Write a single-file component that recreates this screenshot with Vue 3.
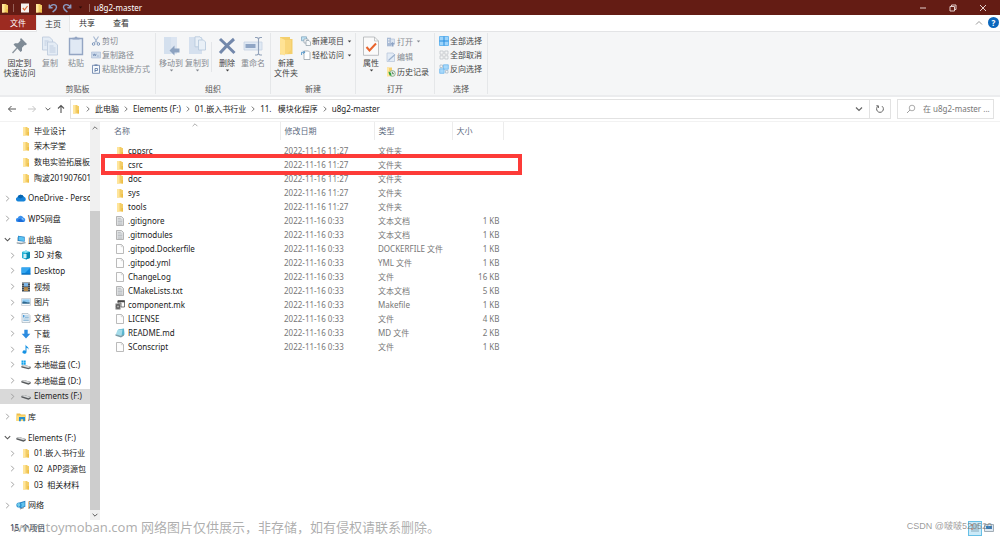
<script setup>
import { ref } from 'vue'

const tree = [
  { t: '毕业设计', i: 'folder', d: 1 },
  { t: '荣木学堂', i: 'folder', d: 1 },
  { t: '数电实验拓展板.', i: 'folder', d: 1 },
  { t: '陶波2019076014', i: 'folder', d: 1 },
  { t: 'OneDrive - Personal', i: 'cloud', d: 0, a: 'r' },
  { t: 'WPS网盘', i: 'wps', d: 0, a: 'r' },
  { t: '此电脑', i: 'pc', d: 0, a: 'd' },
  { t: '3D 对象', i: 'cube', d: 1, a: 'r' },
  { t: 'Desktop', i: 'desktop', d: 1, a: 'r' },
  { t: '视频', i: 'video', d: 1, a: 'r' },
  { t: '图片', i: 'image', d: 1, a: 'r' },
  { t: '文档', i: 'document', d: 1, a: 'r' },
  { t: '下载', i: 'download', d: 1, a: 'r' },
  { t: '音乐', i: 'music', d: 1, a: 'r' },
  { t: '本地磁盘 (C:)', i: 'sysdisk', d: 1, a: 'r' },
  { t: '本地磁盘 (D:)', i: 'disk', d: 1, a: 'r' },
  { t: 'Elements (F:)', i: 'disk', d: 1, a: 'r', sel: true },
  { t: '库', i: 'library', d: 0, a: 'r' },
  { t: 'Elements (F:)', i: 'disk', d: 0, a: 'd' },
  { t: '01.嵌入书行业', i: 'folder', d: 1, a: 'r' },
  { t: '02  APP资源包', i: 'folder', d: 1, a: 'r' },
  { t: '03  相关材料', i: 'folder', d: 1, a: 'r' },
  { t: '网络', i: 'network', d: 0, a: 'r' }
]

const day = '2022-11-16 '
const files = [
  ['cppsrc', '11:27', '文件夹', '', 'folder'],
  ['csrc', '11:27', '文件夹', '', 'folder'],
  ['doc', '11:27', '文件夹', '', 'folder'],
  ['sys', '11:27', '文件夹', '', 'folder'],
  ['tools', '11:27', '文件夹', '', 'folder'],
  ['.gitignore', '0:33', '文本文档', '1 KB', 'text'],
  ['.gitmodules', '0:33', '文本文档', '1 KB', 'text'],
  ['.gitpod.Dockerfile', '0:33', 'DOCKERFILE 文件', '1 KB', 'blank'],
  ['.gitpod.yml', '0:33', 'YML 文件', '1 KB', 'blank'],
  ['ChangeLog', '0:33', '文件', '16 KB', 'blank'],
  ['CMakeLists.txt', '0:33', '文本文档', '5 KB', 'text'],
  ['component.mk', '0:33', 'Makefile', '1 KB', 'make'],
  ['LICENSE', '0:33', '文件', '4 KB', 'blank'],
  ['README.md', '0:33', 'MD 文件', '2 KB', 'md'],
  ['SConscript', '0:33', '文件', '1 KB', 'blank']
]

const crumbs = ['此电脑', 'Elements (F:)', '01.嵌入书行业', '11.   模块化程序', 'u8g2-master']
const query = ref('')
</script>

<template>
  <svg class="defs" aria-hidden="true">
    <symbol id="folder" viewBox="0 0 10 10"><path d="M2 1h4.500v1h1.500v7.500H2z" fill="#f3cd66" /><path d="M2 1h2.500v8.500H2z" fill="#ffe59b" /><path d="M6.500 6h1.500v3.500H6.500z" fill="#eebd45" /></symbol>
    <symbol id="blank" viewBox="0 0 10 10"><path d="M1.500.5h5l2 2v7h-7z" fill="#fdfdfd" stroke="#a9a9a9" stroke-width=".8" /><path d="M6.300.7v2h2" fill="none" stroke="#b5b5b5" stroke-width=".5" /></symbol>
    <symbol id="text" viewBox="0 0 10 10"><path d="M1.500.5h5l2 2v7h-7z" fill="#e2e4e5" stroke="#a5a5a5" stroke-width=".8" /><path d="M2.800 2.500h3M2.800 4h4.500M2.800 5.500h4.500M2.800 7h4.500M2.800 8.300h4.500" stroke="#a8adb1" stroke-width=".6" /></symbol>
    <symbol id="make" viewBox="0 0 10 10"><path d="M3 .5h6.500v6.500H6V3H3z" fill="#fff" stroke="#555" stroke-width=".8" /><path d="M2.600.7h7v1.600h-7z" fill="#444" /><path d="M.5 3.500h5v6h-5z" fill="#777" /><circle cx="3" cy="6.500" r="1.600" fill="#aaa" stroke="#333" stroke-width=".6" /></symbol>
    <symbol id="md" viewBox="0 0 10 10"><path d="M3 1.500l6-1 .5 6L7 8.500z" fill="#58b5cf" /><path d="M2.500 2l5-.6L6.500 8 .8 6.500z" fill="#a4dcea" /><path d="M.5 6.200l5.500 1.500 3-1.500v1.300L6 9.500.5 7.700z" fill="#7b9da9" /></symbol>
    <symbol id="cloud" viewBox="0 0 10 10"><path d="M2 8.500a2.200 2.200 0 0 1-.5-4.300 3.300 3.300 0 0 1 6.200-.4A2.400 2.400 0 0 1 8 8.500z" fill="#1683d9" /><path d="M1.500 4.200a3.300 3.300 0 0 1 6.200-.4l-3 1.800z" fill="#0563ae" /></symbol>
    <symbol id="wps" viewBox="0 0 10 10"><path d="M2 8a2 2 0 0 1-.3-4 3 3 0 0 1 5.600-.6A2.500 2.500 0 0 1 8 8z" fill="#3a91ee" /><path d="M1 6l2 2h5L4.500 4.500z" fill="#1b6bd8" /><path d="M5.500 5l1-1 1.500 2z" fill="#a8d4ff" /></symbol>
    <symbol id="pc" viewBox="0 0 10 10"><path d="M2 .8l6.700 1v5L2 6z" fill="#2383c8" /><path d="M2.700 1.600l5.300.8v3.500l-5.300-.6z" fill="#5cc3f1" /><path d="M.7 7.200l4.600.5L9.500 7v1.200L5 9.300.7 8.500z" fill="#8f9ba3" /><path d="M1 2.200h1v4H1z" fill="#bbc6cc" /></symbol>
    <symbol id="cube" viewBox="0 0 10 10"><path d="M1 2l4-1.500L9 2v6L5 9.500 1 8z" fill="#23b1d5" /><path d="M1 2l4 1 4-1-4-1.500z" fill="#8ae3f2" /><path d="M5 3l4-1v6L5 9.500z" fill="#078bb2" /><path d="M2.500 4h3v4h-3z" fill="#caeff6" /></symbol>
    <symbol id="desktop" viewBox="0 0 10 10"><path d="M.5 1.500h9v7h-9z" fill="#0d86df" /><path d="M.5 1.500h9L4 7H.5z" fill="#36a7f0" /><path d="M.5 7.600h9v.9h-9z" fill="#1166ab" /></symbol>
    <symbol id="video" viewBox="0 0 10 10"><path d="M1 .5h8v9H1z" fill="#3d4853" /><path d="M3 1h4v3.500H3z" fill="#7cb6e8" /><path d="M3 5.200h4V9H3z" fill="#b58a4c" /><path d="M2 1v8M8 1v8" stroke="#d7dde2" stroke-width=".8" stroke-dasharray="1 1" /></symbol>
    <symbol id="image" viewBox="0 0 10 10"><path d="M.6 1.600h8.800v6.800H.6z" fill="#fff" stroke="#a9b4bd" stroke-width=".6" /><path d="M1.300 2.300h7.400v3H1.300z" fill="#8fcaf2" /><path d="M1.300 5c3-1.500 4 1 7.400.2v1.500H1.300z" fill="#2e6991" /></symbol>
    <symbol id="document" viewBox="0 0 10 10"><path d="M1 .5h6l2 2v7H1z" fill="#edf4f9" stroke="#9aaab6" stroke-width=".6" /><path d="M4 3h3.800M4 4.500h3.800M2.300 6h5.500M2.300 7.500h5.500" stroke="#5b9ac8" stroke-width=".6" /><path d="M2 2h1.500v2.500H2z" fill="#4d9cda" /></symbol>
    <symbol id="download" viewBox="0 0 10 10"><path d="M3.300.8h3.400v4h2.600L5 9.400.7 4.800h2.600z" fill="#2c8ce0" /></symbol>
    <symbol id="music" viewBox="0 0 10 10"><path d="M4.500.5c.6 2 3.500 2 3 5.200-.4-1.300-1.300-1.700-2-1.900V8a2 1.600 0 1 1-1-1.300z" fill="#1692e3" /></symbol>
    <symbol id="disk" viewBox="0 0 10 10"><path d="M.4 5L3 4l6.700 2v1.500L7.500 8.800.4 6.500z" fill="#55585a" /><path d="M.4 5L3 4l6.700 2L7.400 7.300z" fill="#d5d7d8" /></symbol>
    <symbol id="sysdisk" viewBox="0 0 10 10"><path d="M.4 6L3 4.800l6.700 2v1.400L7.500 9.300.4 7.500z" fill="#5c5f61" /><path d="M.4 6L3 4.800l6.700 2L7.400 8z" fill="#d5d7d8" /><path d="M.5.5h1.900v1.900H.5zM2.800.5h1.900v1.900H2.800zM.5 2.800h1.900v1.900H.5zM2.800 2.800h1.900v1.900H2.800z" fill="#11a3ec" /></symbol>
    <symbol id="library" viewBox="0 0 10 10"><path d="M.5 1.500h3.500l1 1h4.500V9h-9z" fill="#eebf4b" /><path d="M.5 3.500h9V9h-9z" fill="#ffdd7c" /><path d="M3 5h6v4.200H7.200V7.300H4.800v1.900H3z" fill="#278fd0" /></symbol>
    <symbol id="network" viewBox="0 0 10 10"><path d="M3.500 2.500L9.300.8v6L3.800 8.500z" fill="#247fc2" /><path d="M4.300 3.200l4.300-1.300v4.300L4.500 7.500z" fill="#61c3ee" /><circle cx="3" cy="5" r="2.600" fill="#268dd1" /><path d="M1 4q2-2 3 0T2 7" fill="#74cce9" /><path d="M4 9l4-1.400" stroke="#647987" stroke-width=".8" /></symbol>

    <symbol id="pin" viewBox="0 0 20 20"><path d="M11 3l6 6-1.300 1.200-1-.2-2.700 2.700v3L10.600 17 3.500 9.600 5 8.300h3L10.500 5.500l-.4-1.300z" fill="#7f8b96" transform="translate(0 -1)" /><path d="M7 12l-4.500 5" stroke="#8c969f" stroke-width="1.300" /></symbol>
    <symbol id="copy" viewBox="0 0 20 20"><g fill="#e4ecf5" stroke="#b9c8da" stroke-width=".8"><path d="M2.500 1h7l3 3v10h-10z" /><path d="M7.500 6h7l3 3v10h-10z" /></g><path d="M4.500 5h4M4.500 7h2M4.500 9h2M9.500 10h4M9.500 12h6M9.500 14h6M9.500 16h6" stroke="#bccbdf" stroke-width=".9" /></symbol>
    <symbol id="paste" viewBox="0 0 20 20"><path d="M3.500 2.500h13v16h-13z" fill="#e0e9f4" stroke="#93a5c3" stroke-width="1.400" /><path d="M6.500 3.500V1.800h2L9 .7h2l.5 1.100h2v1.700z" fill="#93a5c3" /></symbol>
    <symbol id="move" viewBox="0 0 20 20"><path d="M3 1h13v17H3z" fill="#dce5f1" /><path d="M3 1h7v17H3z" fill="#d4e0ee" /><path d="M8.500 14.500l5-5v3h5v4h-5v3z" fill="#8da3c1" /></symbol>
    <symbol id="copyto" viewBox="0 0 20 20"><path d="M2 1h13v17H2z" fill="#d5e0ee" /><g fill="#e9f0f7" stroke="#b4c6da" stroke-width=".8"><path d="M8 .8h5l2 2v8h-7z" /><path d="M11.500 4h5l2 2v8h-7z" /></g></symbol>
    <symbol id="delete" viewBox="0 0 20 20"><path d="M3 3Q9.500 9 17.500 17M17 3Q10 9 3 17" fill="none" stroke="#7388ab" stroke-width="3" /></symbol>
    <symbol id="rename" viewBox="0 0 20 20"><path d="M1 6h18v8H1z" fill="#e0e9f4" stroke="#c6d3e3" stroke-width=".8" /><path d="M2.500 8h10v4h-10z" fill="#90a6c5" /><path d="M12 1.500h2l1.500 1 1.500-1h2M12 19h2l1.500-1 1.500 1h2M15.500 2.500V18" fill="none" stroke="#91a1b9" stroke-width="1.100" /></symbol>
    <symbol id="bigfolder" viewBox="0 0 20 20"><path d="M4 1h10v2h2.500v15L4 18.500z" fill="#f4cf6d" /><path d="M4 1.500L9 4v15.500L4 17.500z" fill="#ffe395" /><path d="M9 4h6v10l-4 4H9z" fill="#f9d67b" /></symbol>
    <symbol id="props" viewBox="0 0 20 20"><path d="M2.500 1h11l4 4v14.300h-15z" fill="#fafafa" stroke="#aeb2b5" stroke-width=".8" /><path d="M13.500 1v4h4" fill="none" stroke="#aeb2b5" stroke-width=".7" /><path d="M5.500 11l3 3.500 6.500-7" fill="none" stroke="#e8642d" stroke-width="2" /></symbol>

    <symbol id="cut" viewBox="0 0 10 10"><path d="M2.500.5l4 6.500M7.500.5l-4 6.500" stroke="#a5b7d0" stroke-width="1.100" /><g fill="none" stroke="#7e97bb"><circle cx="2.600" cy="8" r="1.300" /><circle cx="7.400" cy="8" r="1.300" /></g></symbol>
    <symbol id="path" viewBox="0 0 10 10"><path d="M.5 2h9v6h-9z" fill="#cedbeb" stroke="#a7b9d3" stroke-width=".6" /><path d="M2 3.800l.8 2 .8-2 .8 2 .8-2M6 6h.6M7.500 6h.6" fill="none" stroke="#6480aa" stroke-width=".7" /></symbol>
    <symbol id="shortcut" viewBox="0 0 10 10"><path d="M1.500 1.300h7v8h-7z" fill="#f6f9fc" stroke="#7188af" stroke-width=".9" /><path d="M3.500.4h3V2h-3z" fill="#7188af" /><path d="M4 8V4.500h2.500v2H4" fill="none" stroke="#55739f" stroke-width=".8" /></symbol>
    <symbol id="newitem" viewBox="0 0 10 10"><path d="M.5.8h5v4h-5z" fill="#bfe2f5" stroke="#7ba0b8" stroke-width=".7" /><path d="M3 3h4v4H3z" fill="#fff" stroke="#8f9fa9" stroke-width=".7" /><path d="M5 4.500h3l1.500 1.500v3.500H5z" fill="#f8fafb" stroke="#8d9aa3" stroke-width=".7" /></symbol>
    <symbol id="easy" viewBox="0 0 10 10"><path d="M3 1h4.500l1.500 1.500v7H3z" fill="#fff" stroke="#8b959d" stroke-width=".7" /><path d="M.6 5V2.300h3M2.300.8l1.500 1.500-1.500 1.400" fill="none" stroke="#3787c3" stroke-width=".8" /></symbol>
    <symbol id="open" viewBox="0 0 10 10"><path d="M1 .7h4v8.600H1z" fill="#a9bbd5" /><path d="M4.500 2h4v5h-4z" fill="#dce5f0" stroke="#a9bbd5" stroke-width=".6" /><path d="M2 2.500h1.500M2 4h1.500M2 5.500h1.500" stroke="#fff" stroke-width=".7" /><path d="M6.500 5L9 7.200H7.500V9.500h-2V7.200H4z" fill="#8ea4c5" /></symbol>
    <symbol id="edit" viewBox="0 0 10 10"><path d="M1 1h6l1.500 1.500v7H1z" fill="#e3ecf6" stroke="#b4c3d9" stroke-width=".7" /><path d="M9 2.500L4 7l-1.500 1.500" stroke="#9fb3cf" stroke-width="1.200" /></symbol>
    <symbol id="history" viewBox="0 0 10 10"><path d="M1 .5h5v8.700H1z" fill="#f6d16d" /><path d="M1 .5h2v8.700H1z" fill="#ffe69e" /><circle cx="6.400" cy="6.500" r="2.900" fill="#e8eee8" stroke="#7da783" stroke-width=".8" /><path d="M6.400 4.800v1.900h1.600" fill="none" stroke="#47704b" stroke-width=".8" /><path d="M2.500 4.500l2.500 1.500 .5 3q-3-1-3-4.500z" fill="#2da43b" /></symbol>
    <symbol id="selall" viewBox="0 0 10 10"><path d="M.5.5h9v9h-9z" fill="#9ed4fa" stroke="#6bb8f0" stroke-width="1" /><path d="M5 .5v9M.5 5h9" stroke="#248cdf" stroke-width="1" /></symbol>
    <symbol id="selnone" viewBox="0 0 10 10"><g fill="none" stroke="#b9bdc1" stroke-width=".7"><path d="M1 1h3.200v3.200H1zM5.800 1H9v3.200H5.800zM1 5.800h3.200V9H1zM5.800 5.800H9V9H5.800z" /></g></symbol>
    <symbol id="selinv" viewBox="0 0 10 10"><path d="M4.500.8h4.800v4.400H4.500zM.7 4.800h4.400v4.500H.7z" fill="#a8d9fb" stroke="#6fb8ee" stroke-width=".8" /><path d="M1 1h2.500v2.500H1zM6.500 6.500H9V9H6.500z" fill="none" stroke="#a4b5c3" stroke-width=".7" /></symbol>
    <symbol id="check" viewBox="0 0 10 10"><path d="M1 .5h8v9H1z" fill="#f6f2ef" /><path d="M2.800 5l1.700 2L7.500 3" fill="none" stroke="#dd6838" stroke-width="1.200" /></symbol>
    <symbol id="undo" viewBox="0 0 10 10"><path d="M1.300 1.500v3.200h3.300M1.600 4.500C3 1 8.500.5 8.500 4.300 8.500 6.500 6.500 7.500 4.500 9" fill="none" stroke="#8b9bc2" stroke-width="1.400" /></symbol>
    <symbol id="redo" viewBox="0 0 10 10"><path d="M8.700 1.500v3.200H5.400M8.400 4.500C7 1 1.500.5 1.500 4.300 1.500 6.500 3.500 7.500 5.500 9" fill="none" stroke="#8b9bc2" stroke-width="1.400" /></symbol>
    <symbol id="chev-r" viewBox="0 0 10 10"><path d="M3.500 2l3 3-3 3" fill="none" stroke="currentColor" stroke-width="1" /></symbol>
    <symbol id="chev-d" viewBox="0 0 10 10"><path d="M2 3.500l3 3 3-3" fill="none" stroke="currentColor" stroke-width="1.200" /></symbol>
    <symbol id="chev-u" viewBox="0 0 10 10"><path d="M2 6.500l3-3 3 3" fill="none" stroke="currentColor" stroke-width="1" /></symbol>
    <symbol id="back" viewBox="0 0 10 10"><path d="M9 5H1.500M4.500 2l-3 3 3 3" fill="none" stroke="currentColor" stroke-width="1" /></symbol>
    <symbol id="next" viewBox="0 0 10 10"><path d="M1 5h7.500M5.500 2l3 3-3 3" fill="none" stroke="currentColor" stroke-width="1" /></symbol>
    <symbol id="up" viewBox="0 0 10 10"><path d="M5 9V1.500M2 4.500l3-3 3 3" fill="none" stroke="currentColor" stroke-width="1.100" /></symbol>
    <symbol id="tri" viewBox="0 0 10 10"><path d="M1.500 3h7L5 7z" fill="currentColor" /></symbol>
  </svg>

  <div class="window">
    <header class="title">
      <svg class="i"><use href="#folder" /></svg><span class="bar"></span>
      <button aria-label="属性"><svg class="i"><use href="#check" /></svg></button>
      <button aria-label="新建文件夹"><svg class="i"><use href="#folder" /></svg></button>
      <button aria-label="撤消"><svg class="i"><use href="#undo" /></svg></button>
      <button aria-label="恢复"><svg class="i"><use href="#redo" /></svg></button>
      <button class="more" aria-label="自定义"><svg class="tri"><use href="#tri" /></svg></button>
      <span class="bar"></span><h1>u8g2-master</h1>
      <div class="wctl">
        <button aria-label="最小化"><svg viewBox="0 0 8 8"><path d="M1 4h6" /></svg></button>
        <button aria-label="还原"><svg viewBox="0 0 8 8"><path d="M1 2.500h4.500V7H1zM2.500 2.500V1H7v4.500H5.500" /></svg></button>
        <button aria-label="关闭"><svg viewBox="0 0 8 8"><path d="M1 1l6 6M7 1L1 7" /></svg></button>
      </div>
    </header>

    <nav class="tabs">
      <button class="file">文件</button><button class="on">主页</button><button>共享</button><button>查看</button>
      <button class="fold" aria-label="折叠功能区"><svg class="i"><use href="#chev-u" /></svg></button>
      <button class="help" aria-label="帮助">?</button>
    </nav>

    <section class="ribbon">
      <div class="group g1">
        <div class="tools">
          <button class="big wide"><svg><use href="#pin" /></svg>固定到<br>快速访问</button>
          <button class="big dim"><svg><use href="#copy" /></svg>复制</button>
          <button class="big dim"><svg><use href="#paste" /></svg>粘贴</button>
          <div class="small">
            <button class="dim"><svg class="i"><use href="#cut" /></svg>剪切</button>
            <button class="dim"><svg class="i"><use href="#path" /></svg>复制路径</button>
            <button class="dim"><svg class="i"><use href="#shortcut" /></svg>粘贴快捷方式</button>
          </div>
        </div>
        <h2>剪贴板</h2>
      </div>
      <div class="group g2">
        <div class="tools">
          <button class="big dim"><svg><use href="#move" /></svg>移动到<svg class="tri"><use href="#tri" /></svg></button>
          <button class="big dim"><svg><use href="#copyto" /></svg>复制到<svg class="tri"><use href="#tri" /></svg></button>
          <span class="split"></span>
          <button class="big"><svg><use href="#delete" /></svg>删除<svg class="tri"><use href="#tri" /></svg></button>
          <button class="big dim"><svg><use href="#rename" /></svg>重命名</button>
        </div>
        <h2>组织</h2>
      </div>
      <div class="group g3">
        <div class="tools">
          <button class="big"><svg><use href="#bigfolder" /></svg>新建<br>文件夹</button>
          <div class="small">
            <button><svg class="i"><use href="#newitem" /></svg>新建项目<svg class="tri"><use href="#tri" /></svg></button>
            <button><svg class="i"><use href="#easy" /></svg>轻松访问<svg class="tri"><use href="#tri" /></svg></button>
          </div>
        </div>
        <h2>新建</h2>
      </div>
      <div class="group g4">
        <div class="tools">
          <button class="big"><svg><use href="#props" /></svg>属性<svg class="tri"><use href="#tri" /></svg></button>
          <div class="small loose">
            <button class="dim"><svg class="i"><use href="#open" /></svg>打开<svg class="tri"><use href="#tri" /></svg></button>
            <button class="dim"><svg class="i"><use href="#edit" /></svg>编辑</button>
            <button><svg class="i"><use href="#history" /></svg>历史记录</button>
          </div>
        </div>
        <h2>打开</h2>
      </div>
      <div class="group g5">
        <div class="tools">
          <div class="small">
            <button><svg class="i"><use href="#selall" /></svg>全部选择</button>
            <button><svg class="i"><use href="#selnone" /></svg>全部取消</button>
            <button><svg class="i"><use href="#selinv" /></svg>反向选择</button>
          </div>
        </div>
        <h2>选择</h2>
      </div>
    </section>

    <div class="nav">
      <button aria-label="后退"><svg class="i"><use href="#back" /></svg></button>
      <button class="off" aria-label="前进"><svg class="i"><use href="#next" /></svg></button>
      <button class="recent" aria-label="最近位置"><svg class="tiny"><use href="#chev-d" /></svg></button>
      <button class="upb" aria-label="上移"><svg class="i"><use href="#up" /></svg></button>
      <div class="address">
        <svg class="i"><use href="#folder" /></svg>
        <template v-for="c in crumbs" :key="c">
          <svg class="sep"><use href="#chev-r" /></svg><button class="crumb">{{ c }}</button>
        </template>
        <button class="drop" aria-label="历史"><svg class="i"><use href="#chev-d" /></svg></button>
        <button class="refresh" aria-label="刷新"><svg class="i" viewBox="0 0 10 10"><path d="M3 2.200a3.400 3.400 0 1 0 4 0M3.400 4V1.800H1.300" fill="none" stroke="#666" /></svg></button>
      </div>
      <label class="search">
        <svg class="i" viewBox="0 0 10 10"><circle cx="6" cy="4" r="2.800" fill="none" stroke="#888" stroke-width=".7" /><path d="M4 6L1 9" stroke="#888" stroke-width=".8" /></svg>
        <input v-model="query" type="text" aria-label="搜索" placeholder="在 u8g2-master ...">
      </label>
    </div>

    <div class="body">
      <aside>
        <ul>
          <li v-for="(n, k) in tree" :key="k" :class="{ top: n.d === 0, sel: n.sel }">
            <svg class="arrow" :class="{ open: n.a === 'd' }"><use v-if="n.a" :href="n.a === 'd' ? '#chev-d' : '#chev-r'" /></svg>
            <svg class="i"><use :href="'#' + n.i" /></svg><span>{{ n.t }}</span>
          </li>
        </ul>
        <div class="scroll" aria-hidden="true">
          <svg class="tiny"><use href="#chev-u" /></svg>
          <div class="track"><div class="thumb"></div></div>
          <svg class="tiny"><use href="#chev-d" /></svg>
        </div>
      </aside>
      <main>
        <table>
          <thead>
            <tr>
              <th class="name">名称<svg class="sort"><use href="#chev-u" /></svg></th>
              <th class="date">修改日期</th><th class="type">类型</th><th class="size">大小</th>
            </tr>
          </thead>
          <tbody>
            <tr v-for="f in files" :key="f[0]">
              <td class="fname"><svg class="i"><use :href="'#' + f[4]" /></svg>{{ f[0] }}</td>
              <td>{{ day + f[1] }}</td><td>{{ f[2] }}</td><td class="kb">{{ f[3] }}</td>
            </tr>
          </tbody>
        </table>
        <div class="mark"></div>
      </main>
    </div>

    <footer>
      <span>15 个项目</span>
      <div class="views">
        <button class="on" aria-label="详细信息"><svg class="i" viewBox="0 0 10 10"><path d="M1 2h8M1 4h8M1 6h8M1 8h8" stroke="#7a99aa" stroke-width=".8" /><path d="M1 2h2M1 6h2" stroke="#d56a45" /></svg></button>
        <button aria-label="大图标"><svg class="i" viewBox="0 0 10 10"><path d="M.5 1.500h9v7h-9z" fill="#dfe9f2" stroke="#8d9aa5" stroke-width=".8" /><path d="M2 3h6v3H2z" fill="#3683c4" /></svg></button>
      </div>
    </footer>
    <div class="water">www.toymoban.com 网络图片仅供展示，非存储，如有侵权请联系删除。</div>
    <div class="csdn">CSDN @啵啵520520</div>
  </div>
</template>

<style>
body { margin: 0; background: #fff; }
</style>

<style scoped>
* { box-sizing: border-box; }
.defs { position: absolute; width: 0; height: 0; }
.window { position: relative; display: flex; flex-direction: column; min-height: 100vh; overflow: hidden; font: 8px/10px "Noto Sans", "Noto Sans CJK SC", sans-serif; color: #222; background: #fff; }
button { display: flex; align-items: center; justify-content: center; padding: 0; border: 0; background: none; font: inherit; color: inherit; white-space: pre; }
svg { flex: none; display: block; }
h1, h2 { margin: 0; font: inherit; }
.i { width: 10px; height: 10px; }
.tri { width: 5px; height: 5px; }
.tiny { width: 8px; height: 8px; }

.title { display: flex; align-items: center; height: 15px; background: #641c14; color: #fff; }
.title .bar { width: 1px; height: 8px; margin: 0 4px 0 3px; background: #956159; }
.title button { width: 14px; height: 15px; }
.title .more { width: 12px; color: #2c0a06; }
.wctl { display: flex; margin-left: auto; }
.title .wctl button { width: 30px; }
.wctl svg { width: 8px; height: 8px; fill: none; stroke: #e4cfcc; stroke-width: 1; }
.wctl { padding-right: 2px; }

.tabs { display: flex; height: 17px; border-bottom: 1px solid #e3e4e6; color: #333; }
.tabs button { width: 34px; height: 16px; }
.tabs .file { width: 36px; height: 15px; background: #9d2b21; color: #fff; }
.tabs .on { height: 17px; background: #f5f6f7; border: 1px solid #e6e7e8; border-bottom: 0; }
.tabs .fold { width: 14px; margin-left: auto; color: #999; }
.tabs .help { width: 11px; height: 11px; margin: 2px 1px 0 2px; border-radius: 50%; background: #0b67bd; color: #fff; font-weight: 700; }

.ribbon { display: flex; height: 65px; padding: 1px 0; background: #f5f6f7; border-bottom: 2px solid #ebecee; }
.group { flex: none; display: flex; flex-direction: column; justify-content: space-between; border-right: 1px solid #e5e7e9; color: #444; }
.g1 { width: 156px; }
.g2 { width: 115px; }
.g3 { width: 85px; }
.g4 { width: 79px; }
.g5 { width: 53px; }
.group h2 { text-align: center; color: #555; }
.tools { display: flex; padding-left: 2px; }
.big { flex-direction: column; justify-content: flex-start; width: 26px; padding-top: 3px; }
.big > svg:first-child { width: 20px; height: 20px; margin-bottom: 2px; }
.wide { width: 35px; }
.dim { color: #858a91; }
.split { width: 1px; height: 30px; margin: 9px 2px 0 1px; background: #e3e5e8; }
.small { display: flex; flex-direction: column; align-items: flex-start; padding-top: 1px; margin-left: 2px; }
.small button { height: 14px; gap: 1px; }
.small .tri { margin-left: 2px; }
.loose button { height: 15px; }

.nav { display: flex; align-items: center; height: 24px; padding: 0 6px 0 7px; color: #555; }
.nav .off { margin-left: 10px; color: #c5c5c5; }
.recent { margin-left: 7px; }
.upb { margin: 0 4px; }
.address { flex: 1; display: flex; align-items: center; height: 20px; border: 1px solid #e2e2e2; color: #222; }
.sep { width: 8px; height: 8px; margin: 0 3px; color: #555; }
.drop { width: 20px; margin-left: auto; color: #666; }
.refresh { width: 21px; height: 18px; border-left: 1px solid #e2e2e2; }
.search { display: flex; align-items: center; width: 97px; height: 20px; margin-left: 6px; padding-left: 8px; gap: 7px; border: 1px solid #e2e2e2; }
.search input { flex: 1; min-width: 0; padding: 0; border: 0; outline: 0; background: none; font: inherit; color: #333; }
.search input::placeholder { color: #777; opacity: 1; }

.body { flex: 1; display: flex; border-top: 1px solid #f2f2f2; }
aside { flex: none; display: flex; width: 100px; }
ul { display: flex; flex-direction: column; justify-content: space-between; flex: 1; min-width: 0; margin: 0; padding: 1px 0 7px; list-style: none; }
li { display: flex; align-items: center; height: 15px; padding-left: 8px; white-space: pre; overflow: hidden; }
li .arrow { width: 9px; height: 9px; margin-right: 4px; color: #999; }
li .open { color: #555; }
li .i { margin-right: 3px; }
li.top { margin-top: 5px; padding-left: 3px; }
li.top .i { margin-right: 2px; }
li.sel { background: #d9d9d9; }
.scroll { display: flex; flex-direction: column; align-items: center; width: 10px; padding: 2px 0 1px; background: #f0f0f0; color: #555; }
.track { flex: 1; display: flex; flex-direction: column; justify-content: flex-end; width: 100%; padding-bottom: 1px; }
.thumb { height: 79%; background: #cdcdcd; }

main { position: relative; flex: 1; }
table { border-collapse: collapse; table-layout: fixed; width: 404px; color: #777; }
th { position: relative; height: 18px; padding: 0 0 0 4px; border-right: 1px solid #ececec; text-align: left; font-weight: 400; color: #5d6b80; }
.name { width: 180px; padding-left: 14px; }
.date { width: 94px; }
.type { width: 78px; }
.sort { position: absolute; left: 91px; top: 0; width: 8px; height: 8px; margin-top: -1px; color: #999; }
tbody::before { content: ""; display: block; height: 4px; }
td { height: 14px; padding: 0 0 0 4px; white-space: nowrap; }
td.fname { display: flex; align-items: center; gap: 3px; padding-left: 15px; color: #222; }
td.kb { padding-right: 4px; text-align: right; }
.mark { position: absolute; left: 1px; top: 32px; width: 421px; height: 21px; border: 4px solid #fd3b38; }

footer { display: flex; align-items: center; justify-content: space-between; height: 16px; padding: 0 4px 0 10px; color: #24364b; }
.views { display: flex; }
.views button { width: 14px; height: 15px; }
.views .on { border: 1px solid #66bfe6; background: #cbeaf8; }
.water { position: absolute; left: 12px; bottom: 0; font: 13px/17px "Noto Sans", "Noto Sans CJK SC", sans-serif; color: rgba(120, 120, 120, .6); white-space: nowrap; }
.csdn { position: absolute; right: 8px; bottom: 4px; font: 9px/11px "Liberation Sans", "Noto Sans CJK SC", sans-serif; color: rgba(110, 110, 110, .7); white-space: nowrap; }
</style>
